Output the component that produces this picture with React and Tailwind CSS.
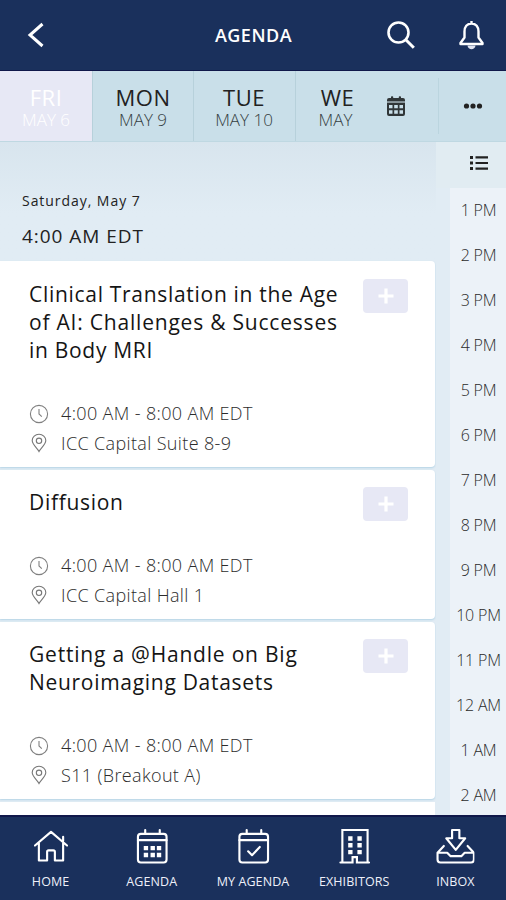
const DAYS = [
  { day: "FRI", date: "MAY 6", box: "w-[92px]", active: true },
  { day: "MON", date: "MAY 9", box: "w-[101px]" },
  { day: "TUE", date: "MAY 10", box: "w-[102px] pr-px" },
  { day: "WE", date: "MAY", box: "w-[80px]" }
];

const SESSIONS = [
  {
    lines: [
      { text: "Clinical Translation in the Age" },
      { text: "of AI: Challenges & Successes", wide: true },
      { text: "in Body MRI" }
    ],
    time: "4:00 AM - 8:00 AM EDT",
    place: "ICC Capital Suite 8-9",
    height: "h-[206px] pt-[19px]"
  },
  {
    lines: [{ text: "Diffusion" }],
    time: "4:00 AM - 8:00 AM EDT",
    place: "ICC Capital Hall 1",
    height: "h-[149px] pt-[18px]"
  },
  {
    lines: [{ text: "Getting a @Handle on Big", wide: true }, { text: "Neuroimaging Datasets" }],
    time: "4:00 AM - 8:00 AM EDT",
    place: "S11 (Breakout A)",
    height: "h-[177px] pt-[18px]"
  }
];

const HOURS = [
  "1 PM", "2 PM", "3 PM", "4 PM", "5 PM", "6 PM", "7 PM",
  "8 PM", "9 PM", "10 PM", "11 PM", "12 AM", "1 AM", "2 AM"
];

function ClockIcon() {
  return (
    <svg className="size-5" viewBox="0 0 20 20" fill="none" stroke="#808080" strokeWidth="1.1">
      <circle cx="10" cy="10" r="8.6" />
      <path d="M10 5v5l2.800 2.600" />
    </svg>
  );
}

function PinIcon() {
  return (
    <svg className="size-5" viewBox="0 0 20 20" fill="none" stroke="#777" strokeWidth="1.1">
      <path d="M10 18.5C8.5 15.5 3.2 11.5 3.2 7.6a6.8 6.3 0 0 1 13.6 0c0 3.9-5.3 7.9-6.8 10.9z" />
      <circle cx="10" cy="7.8" r="2.7" />
    </svg>
  );
}

function CalendarGridIcon() {
  return (
    <svg className="h-5 w-[18px]" viewBox="0 0 18 20">
      <path
        fill="#303638"
        fillRule="evenodd"
        d="M2 2h2V1q0-.8.8-.8h.6q.8 0 .8.8v1h5.6V1q0-.8.8-.8h.6q.8 0 .8.8v1h2q2 0 2 2v1.500H0V4q0-2 2-2zM0 7h18v11q0 2-2 2H2q-2 0-2-2zM2 9v3.200h3.500V9zM7.200 9v3.200h3.600V9zM12.500 9v3.200H16V9zM2 14.200v3.600h3.500v-3.600zM7.200 14.200v3.600h3.600v-3.600zM12.500 14.200v3.600H16v-3.600z"
      />
      <path fill="#8a979c" d="M0 5.500h18V7H0z" />
    </svg>
  );
}

function NavIcon({ children }) {
  return (
    <svg
      className="size-10"
      viewBox="0 0 40 40"
      fill="none"
      stroke="#fff"
      strokeWidth="2.2"
      strokeLinejoin="round"
      strokeLinecap="round"
    >
      {children}
    </svg>
  );
}

const NAV = [
  {
    label: "HOME",
    icon: (
      <NavIcon>
        <path d="M3.500 19.500 20 5.500l16.500 14M7.500 17v18h8.500V26q0-1.500 1.500-1.500h5q1.500 0 1.500 1.500v9h8.500V17M32.500 15V10.500" />
      </NavIcon>
    )
  },
  {
    label: "AGENDA",
    icon: (
      <NavIcon>
        <rect x="5.500" y="7.500" width="29.500" height="29.500" rx="3" />
        <path d="M5.500 14h29.500M13 3.500v4M28 3.500v4" />
        <path
          d="M11.500 20h4.500v4.500h-4.500zM18.500 20h4.500v4.500h-4.500zM25 20h4.500v4.500H25zM11.500 27h4.500v4.500h-4.500zM18.500 27h4.500v4.500h-4.500zM25 27h4.500v4.500H25z"
          fill="#fff"
          stroke="none"
        />
      </NavIcon>
    )
  },
  {
    label: "MY AGENDA",
    icon: (
      <NavIcon>
        <rect x="6" y="7.500" width="29.500" height="29.500" rx="3" />
        <path d="M6 14h29.500M13.500 3.500v4M28.500 3.500v4M15 25.500l4 4 8-8.500" />
      </NavIcon>
    )
  },
  {
    label: "EXHIBITORS",
    icon: (
      <NavIcon>
        <path d="M8 37V3.500h26V37M6 37H18.500v-5.500H23V37h12.500" strokeLinejoin="miter" />
        <path
          d="M14 10h4.500v4.500H14zM23.500 10H28v4.500h-4.500zM14 17h4.500v4.500H14zM23.500 17H28v4.500h-4.500zM14 24h4.500v4.500H14zM23.500 24H28v4.500h-4.500z"
          fill="#fff"
          stroke="none"
        />
      </NavIcon>
    )
  },
  {
    label: "INBOX",
    icon: (
      <NavIcon>
        <path d="M17 3.500h7.500v8.500h6L20.800 24 11 12h6zM8.500 20 2 27v7q0 3 3 3h31.500q3 0 3-3v-7L33 20M2 27h10l3.500 3.500h11l3.500-3.500h9.500" />
      </NavIcon>
    )
  }
];

function SessionCard({ session }) {
  return (
    <article
      className={`${session.height} flex shrink-0 flex-col rounded-r-sm bg-white pr-[27px] pb-[9px] pl-[29px] shadow-[0_1px_2px_#b5d4e6]`}
    >
      <div className="flex items-start justify-between">
        <h2 className="text-[21px] leading-7 whitespace-nowrap text-[#151515]">
          {session.lines.map((line) => (
            <span key={line.text} className={`block ${line.wide ? "tracking-[0.79px]" : "tracking-[0.7px]"}`}>
              {line.text}
            </span>
          ))}
        </h2>
        <button className="-mt-px flex h-[34px] w-[45px] shrink-0 items-center justify-center rounded-[4px] bg-[#e7e8f5]">
          <svg className="size-4" viewBox="0 0 16 16" stroke="#fff" strokeWidth="3.200">
            <path d="M8 0.500v15M0.500 8h15" />
          </svg>
        </button>
      </div>
      <div className="mt-auto text-[18px] leading-[29.5px] font-light tracking-[0.36px] text-[#2c2c2c]">
        <p className="flex items-center gap-3">
          <ClockIcon />
          {session.time}
        </p>
        <p className="flex items-center gap-3">
          <PinIcon />
          {session.place}
        </p>
      </div>
    </article>
  );
}

function App() {
  return (
    <div className="flex h-[900px] w-[506px] flex-col overflow-hidden bg-[#e1ecf4] font-['Open_Sans','Noto_Sans',sans-serif]">
      <header className="flex h-[71px] shrink-0 items-center border-b border-[#10184a] bg-[#1a305c] text-white">
        <div className="flex flex-1 pl-[26px]">
          <svg className="h-7 w-5" viewBox="0 0 20 28" fill="none" stroke="#fff" strokeWidth="3">
            <path d="M16.500 3 4 14l12.500 11" />
          </svg>
        </div>
        <h1 className="-ml-1 pt-px text-[18px] font-semibold tracking-[0.5px]">AGENDA</h1>
        <div className="flex flex-1 items-center justify-end gap-[42px] pr-[21px]">
          <svg className="size-[30px]" viewBox="0 0 30 30" fill="none" stroke="#fff" strokeWidth="2.600">
            <circle cx="12.500" cy="12.500" r="10" />
            <path d="m19.800 19.800 8 8" strokeWidth="3" />
          </svg>
          <svg className="h-[30px] w-[27px]" viewBox="0 0 27 30" fill="none" stroke="#fff" strokeWidth="2.400">
            <path
              d="M13.500 3.500c-4.500 0-7 3.500-7 8v6l-4 5.500v1h22v-1l-4-5.500v-6c0-4.500-2.500-8-7-8zM13.500 1v2.500"
              strokeLinejoin="round"
            />
            <path d="M9.500 25.500h8c-.5 5-7.500 5-8 0z" fill="#dfe4f2" stroke="none" />
          </svg>
        </div>
      </header>

      <nav className="flex h-[71px] shrink-0 items-center border-b border-[#bfd8e2] bg-[#c9dfe9]">
        {DAYS.map((item) => (
          <div
            key={item.day}
            className={`${item.box} flex h-full flex-col items-center pt-[13px] ${
              item.active ? "bg-[#e7e8f5] text-white" : "border-l border-[#b7d1db] text-[#222]"
            }`}
          >
            <span className={`text-[22px] leading-[27px] tracking-[0.5px] ${item.day === "WE" ? "pl-1" : ""}`}>
              {item.day}
            </span>
            <span className={`text-[17px] leading-[17px] font-light ${item.active ? "" : "text-[#353e42]"}`}>
              {item.date}
            </span>
          </div>
        ))}
        <div className="flex flex-1 pl-[12px]">
          <CalendarGridIcon />
        </div>
        <div className="flex h-14 w-[68px] items-center justify-center border-l border-[#bbd5df] pl-px">
          <svg className="h-[6px] w-5" viewBox="0 0 20 6" fill="#222">
            <circle cx="3.500" cy="3" r="2.600" />
            <circle cx="10" cy="3" r="2.600" />
            <circle cx="16.500" cy="3" r="2.600" />
          </svg>
        </div>
      </nav>

      <div className="flex min-h-0 flex-1">
        <main className="flex w-[436px] flex-col overflow-hidden pr-px">
          <div className="-mr-px h-[119px] shrink-0 bg-linear-to-b from-[#d8e5ee] to-[#e1ecf4] to-60% pl-[22px] text-[#222]">
            <p className="pt-[49px] text-[14px] leading-5 tracking-[0.95px]">Saturday, May 7</p>
            <p className="mt-[13px] text-[19px] leading-6 tracking-[0.95px]">4:00 AM EDT</p>
          </div>
          <div className="flex flex-col gap-[3px]">
            {SESSIONS.map((session) => (
              <SessionCard key={session.place} session={session} />
            ))}
            <div className="h-5 bg-white" />
          </div>
        </main>
        <aside className="flex flex-1 flex-col">
          <div className="flex h-[46px] shrink-0 items-start justify-center bg-[#e1ecf2] pt-[14px] pl-[15px]">
            <svg className="h-[14px] w-[18px]" viewBox="0 0 18 14" fill="#222">
              <path d="M0 0h3v3H0zM5.500 0.300H18v2.200H5.500zM0 5.500h3v3H0zM5.500 5.900H18v2.200H5.500zM0 11h3v3H0zM5.500 11.500H18v2.200H5.500z" />
            </svg>
          </div>
          <ul className="ml-[14px] flex-1 overflow-hidden bg-[#ecf2f8] pl-px text-center text-[16px] font-light tracking-[-0.2px] text-[#2a2a2a]">
            {HOURS.map((hour) => (
              <li key={hour} className="h-[45px] leading-[45px] whitespace-nowrap">
                {hour}
              </li>
            ))}
          </ul>
        </aside>
      </div>

      <footer className="grid h-[85px] shrink-0 grid-cols-5 border-t-2 border-[#10184a] bg-[#1a305c] text-white">
        {NAV.map((item) => (
          <div key={item.label} className="flex flex-col items-center pt-[9px]">
            <div className="flex h-10 scale-[0.97] items-center">{item.icon}</div>
            <span className="mt-2 text-[12.5px] leading-4 tracking-[0.1px] whitespace-nowrap text-[#eef0fa]">
              {item.label}
            </span>
          </div>
        ))}
      </footer>
    </div>
  );
}

export default App;
